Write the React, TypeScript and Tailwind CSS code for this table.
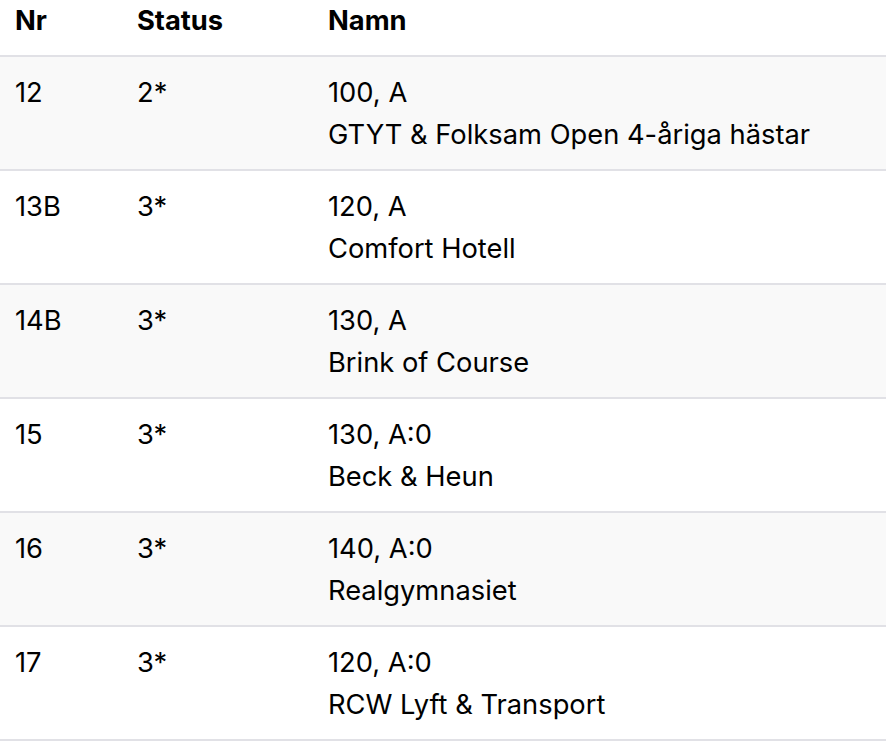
const rows = [
  { nr: "12", status: "2*", klass: "100, A", namn: "GTYT & Folksam Open 4-åriga hästar" },
  { nr: "13B", status: "3*", klass: "120, A", namn: "Comfort Hotell" },
  { nr: "14B", status: "3*", klass: "130, A", namn: "Brink of Course" },
  { nr: "15", status: "3*", klass: "130, A:0", namn: "Beck & Heun" },
  { nr: "16", status: "3*", klass: "140, A:0", namn: "Realgymnasiet" },
  { nr: "17", status: "3*", klass: "120, A:0", namn: "RCW Lyft & Transport" },
];

export default function App() {
  return (
    <div className="w-[886px] h-[744px] overflow-hidden bg-white text-black font-['Inter',sans-serif] text-[27.3px] leading-[42px]">
      <div className="grid grid-cols-[137px_191px_1fr] border-b-2 border-[#e1e1e6] pb-[13px] font-bold">
        <div className="pl-[15px]">Nr</div>
        <div>Status</div>
        <div>Namn</div>
      </div>
      {rows.map((r, i) => (
        <div
          key={r.nr}
          className={
            "grid grid-cols-[137px_191px_1fr] border-b-2 border-[#e1e1e6] pt-[15px] pb-[13px] " +
            (i % 2 === 0 ? "bg-[#f9f9f9]" : "bg-white")
          }
        >
          <div className="pl-[15px]">{r.nr}</div>
          <div>{r.status}</div>
          <div className="flex flex-col">
            <span>{r.klass}</span>
            <span>{r.namn}</span>
          </div>
        </div>
      ))}
    </div>
  );
}
